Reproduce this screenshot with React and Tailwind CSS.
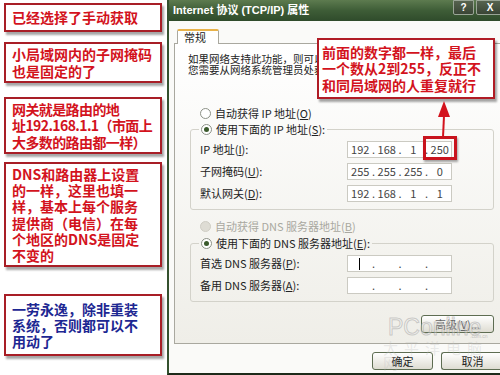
import React from "react";

const cjk = "font-['Noto_Sans_CJK_SC',sans-serif]";

const notes = [
  { lines: ["已经选择了手动获取"], h: "h-[29px]", mt: "mt-[3px]" },
  { lines: ["小局域网内的子网掩码", "也是固定的了"], h: "h-[41px]", mt: "mt-[10px]" },
  {
    lines: ["网关就是路由的地", "址192.168.1.1（市面上", "大多数的路由都一样）"],
    h: "h-[57px]",
    mt: "mt-[14px]",
    tight: true,
  },
  {
    lines: ["DNS和路由器上设置", "的一样，这里也填一", "样，基本上每个服务", "提供商（电信）在每", "个地区的DNS是固定", "不变的"],
    h: "h-[105px]",
    mt: "mt-[8px]",
  },
  {
    lines: ["一劳永逸，除非重装", "系统，否则都可以不", "用动了"],
    h: "h-[62px]",
    mt: "mt-[27px]",
    blue: true,
  },
];

function Radio({ checked, disabled }) {
  return (
    <span
      className={`w-[11px] h-[11px] rounded-full border flex items-center justify-center shrink-0 ${
        disabled ? "bg-[#dedcd4] border-[#cfcdc4]" : "bg-white border-[#8c9187]"
      }`}
    >
      {checked && <span className="w-[5px] h-[5px] rounded-full bg-[#3a5a2c]" />}
    </span>
  );
}

function IpField({ parts = ["", "", "", ""], caret }) {
  return (
    <div className="w-[105px] h-[17px] border border-[#cbcac2] bg-white flex items-center pl-[1px] text-[11px] text-[#444]">
      {parts.map((p, i) => (
        <React.Fragment key={i}>
          <span className="w-[23px] text-center leading-none relative">
            {i === 0 && caret ? <span className="absolute left-[10px] top-[-6px] w-[1px] h-[12px] bg-black" /> : p}
          </span>
          {i < 3 && <span className="w-[4px] text-center leading-none">.</span>}
        </React.Fragment>
      ))}
    </div>
  );
}

function Row({ label, children }) {
  return (
    <div className="flex items-center h-[17px]">
      <span className="w-[148px] pl-[1px] text-[11px] text-[#222]">{label}</span>
      {children}
    </div>
  );
}

function XpButton({ children, className = "" }) {
  return (
    <div
      className={`h-[18px] rounded-[3px] border border-[#5e6d52] bg-gradient-to-b from-white to-[#dedcd2] flex items-center justify-center text-[11px] text-[#222] ${className}`}
    >
      {children}
    </div>
  );
}

export default function App() {
  return (
    <div className={`relative w-[500px] h-[375px] bg-white flex overflow-hidden ${cjk}`}>
      {/* Left annotations */}
      <div className="w-[167px] shrink-0 flex flex-col pl-[4px]">
        {notes.map((n, i) => (
          <div
            key={i}
            className={`${n.mt} ${n.h} w-[158px] border-2 border-[#a81e26] bg-white shadow-[2px_3px_2px_rgba(0,0,0,0.35)] pl-[6px] flex flex-col justify-center`}
          >
            {n.lines.map((l) => (
              <div
                key={l}
                className={`text-[14px] font-bold leading-[16.3px] whitespace-nowrap ${
                  n.tight ? "tracking-[-0.6px]" : ""
                } ${n.blue ? "text-[#1d2792]" : "text-[#d3131d]"}`}
              >
                {l}
              </div>
            ))}
          </div>
        ))}
      </div>

      {/* Dialog */}
      <div className="flex-1 flex flex-col border-l-2 border-[#34512e] border-b-2 border-b-[#1d2a1a]">
        <div className="h-[21px] shrink-0 bg-gradient-to-b from-[#5d7b4f] via-[#3e5d37] to-[#2f4b2b] flex items-center pl-[4px] pr-[2px]">
          <span className="text-white font-bold text-[11px] font-['Liberation_Sans','Noto_Sans_CJK_SC',sans-serif]">
            Internet 协议 (TCP/IP) 属性
          </span>
          <div className="ml-auto self-start flex gap-[2px]">
            <div className="w-[21px] h-[15px] rounded-b-[2px] border border-[#9aa596] bg-gradient-to-b from-[#56634f] to-[#3a4535] flex items-center justify-center text-white text-[10px] font-bold font-['Liberation_Sans',sans-serif]">
              ?
            </div>
            <div className="w-[28px] h-[15px] rounded-b-[2px] border border-[#9aa596] bg-gradient-to-b from-[#56634f] to-[#3a4535] flex items-center justify-center text-white text-[10px] font-bold font-['Liberation_Sans',sans-serif]">
              X
            </div>
          </div>
        </div>

        <div className="flex-1 bg-[#fafaf8] pl-[5px] pr-[3px] flex flex-col">
          {/* tab */}
          <div className="mt-[7px] ml-[3px] w-[42px] h-[15px] border border-b-0 border-[#a9a89f] border-t-2 border-t-[#e8b24a] rounded-t-[2px] bg-white text-[11px] text-[#222] pl-[6px] leading-[13px] relative top-[1px]">
            常规
          </div>
          <div className="h-[301px] border border-[#a9a89f] bg-gradient-to-b from-white to-[#efeee8] flex flex-col">
            <div className="mt-[9px] pl-[13px] text-[10.5px] leading-[11px] text-[#222] whitespace-nowrap">
              <div>如果网络支持此功能，则可以获取自动指派的 IP 设置。否则，</div>
              <div>您需要从网络系统管理员处获得适当的 IP 设置。</div>
            </div>

            <div className="mt-[32px] ml-[25px] h-[13px] flex items-center gap-[4px] text-[11px] text-[#222]">
              <Radio />
              <span>
                自动获得 IP 地址(<u>O</u>)
              </span>
            </div>

            <fieldset className="mt-[3px] ml-[15px] mr-[8px] border border-[#d3d2ca] rounded-[3px] px-[8px] pb-[7px]">
              <legend className="px-[2px] h-[13px] flex items-center gap-[4px] text-[11px] text-[#222]">
                <Radio checked />
                <span>
                  使用下面的 IP 地址(<u>S</u>):
                </span>
              </legend>
              <div className="pt-[5px] flex flex-col gap-[5px]">
                <Row label={<>IP 地址(<u>I</u>):</>}>
                  <IpField parts={["192", "168", "1", "250"]} />
                </Row>
                <Row label={<>子网掩码(<u>U</u>):</>}>
                  <IpField parts={["255", "255", "255", "0"]} />
                </Row>
                <Row label={<>默认网关(<u>D</u>):</>}>
                  <IpField parts={["192", "168", "1", "1"]} />
                </Row>
              </div>
            </fieldset>

            <div className="mt-[10px] ml-[25px] h-[13px] flex items-center gap-[4px] text-[11px] text-[#a9a8a0]">
              <Radio disabled />
              <span>
                自动获得 DNS 服务器地址(<u>B</u>)
              </span>
            </div>

            <fieldset className="mt-[4px] ml-[15px] mr-[8px] border border-[#d3d2ca] rounded-[3px] px-[8px] pb-[7px]">
              <legend className="px-[2px] h-[13px] flex items-center gap-[4px] text-[11px] text-[#222]">
                <Radio checked />
                <span>
                  使用下面的 DNS 服务器地址(<u>E</u>):
                </span>
              </legend>
              <div className="pt-[5px] flex flex-col gap-[5px]">
                <Row label={<>首选 DNS 服务器(<u>P</u>):</>}>
                  <IpField caret />
                </Row>
                <Row label={<>备用 DNS 服务器(<u>A</u>):</>}>
                  <IpField />
                </Row>
              </div>
            </fieldset>

            <div className="mt-[13px] mr-[8px] flex justify-end">
              <XpButton className="w-[73px] text-[#666]">
                高级(<u>V</u>)...
              </XpButton>
            </div>
          </div>

          <div className="mt-[8px] flex gap-[8px] pl-[198px]">
            <XpButton className="w-[61px] h-[17px]">确定</XpButton>
            <XpButton className="w-[62px] h-[17px] rounded-r-none border-r-0">取消</XpButton>
          </div>
        </div>
      </div>

      {/* Callout over the dialog */}
      <div className="absolute left-[317px] top-[38px] w-[178px] h-[61px] border-2 border-[#b01c25] bg-white shadow-[2px_3px_2px_rgba(0,0,0,0.35)] pl-[3px] flex flex-col justify-center">
        {["前面的数字都一样，最后", "一个数从2到255，反正不", "和同局域网的人重复就行"].map((l) => (
          <div key={l} className="text-[14px] font-bold leading-[16.5px] text-[#d3131d] whitespace-nowrap">
            {l}
          </div>
        ))}
      </div>

      {/* arrow */}
      <svg className="absolute left-[436px] top-[100px]" width="16" height="38" viewBox="0 0 16 38">
        <polygon points="8,1 2,17 14,17" fill="#d3131d" />
        <line x1="8" y1="16" x2="7" y2="37" stroke="#d3131d" strokeWidth="2" />
      </svg>

      {/* highlight of last octet */}
      <div className="absolute left-[423px] top-[136px] w-[34px] h-[24px] border-[3px] border-[#c8141e] shadow-[1px_2px_2px_rgba(0,0,0,0.35)]" />

      {/* watermark */}
      <div className="absolute left-[388px] top-[316px] text-[23px] leading-none text-white/30 font-['Liberation_Sans',sans-serif] [-webkit-text-stroke:1px_rgba(150,150,150,0.45)] pointer-events-none">
        PConline
      </div>
      <div className="absolute left-[470px] top-[333px] text-[5px] text-[#9a9a9a]/60 font-['Liberation_Sans',sans-serif] pointer-events-none">
        .com.cn
      </div>
      <div className="absolute left-[383px] top-[340px] text-[15px] tracking-[6px] leading-none text-[#bdbdbd]/30 pointer-events-none">
        太平洋电脑网
      </div>
    </div>
  );
}
